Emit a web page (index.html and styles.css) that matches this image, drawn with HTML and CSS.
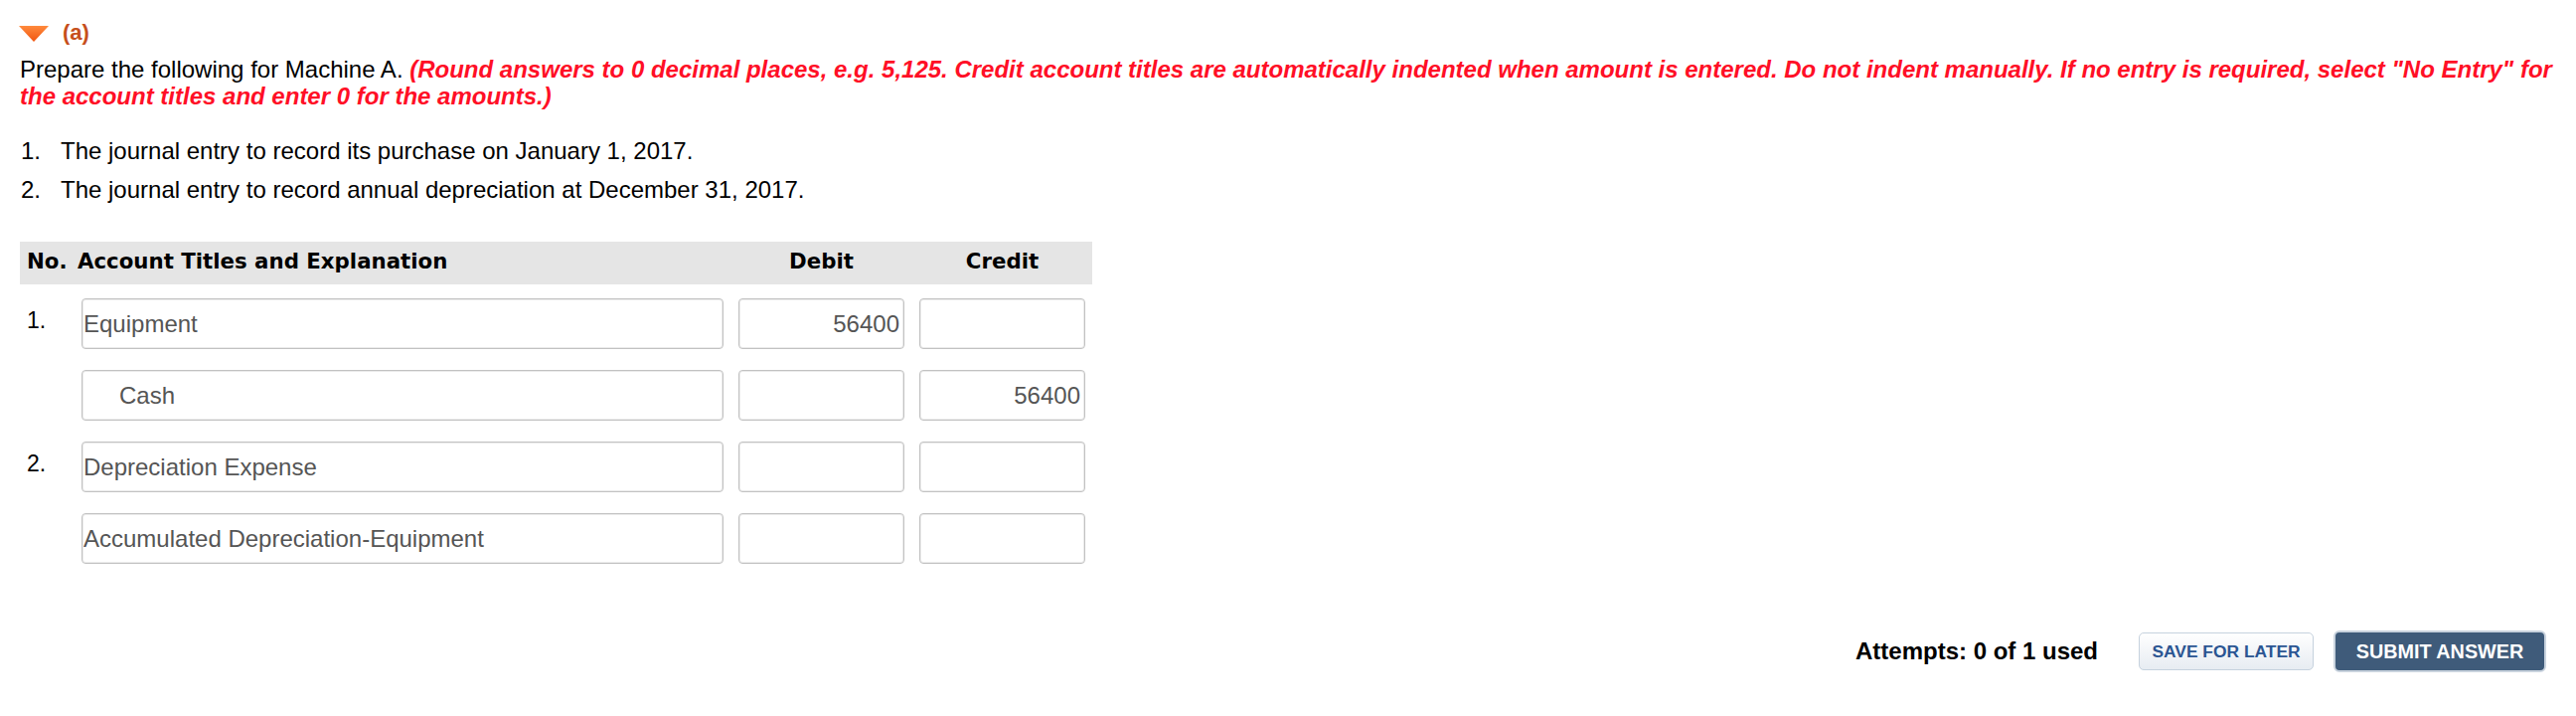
FILE: index.html
```html
<!DOCTYPE html>
<html lang="en">
<head>
<meta charset="utf-8">
<title>Question (a)</title>
<link rel="stylesheet" href="styles.css">
</head>
<body>
<div class="page">
  <div class="part-head">
    <svg class="caret" width="30" height="16" viewBox="0 0 30 16" aria-hidden="true">
      <defs>
        <linearGradient id="cg" x1="0" y1="0" x2="0" y2="1">
          <stop offset="0" stop-color="#ff8a3c"/>
          <stop offset="1" stop-color="#f05510"/>
        </linearGradient>
      </defs>
      <polygon points="0,0 30,0 15,16" fill="url(#cg)"/>
    </svg>
    <span class="part-label">(a)</span>
  </div>

  <p class="instructions">Prepare the following for Machine A. <em class="warn">(Round answers to 0 decimal places, e.g. 5,125. Credit account titles are automatically indented when amount is entered. Do not indent manually. If no entry is required, select "No Entry" for the account titles and enter 0 for the amounts.)</em></p>

  <ol class="tasks">
    <li><span class="num">1.</span><span>The journal entry to record its purchase on January 1, 2017.</span></li>
    <li><span class="num">2.</span><span>The journal entry to record annual depreciation at December 31, 2017.</span></li>
  </ol>

  <div class="journal">
    <div class="jhead">
      <div class="h-no">No.</div>
      <div class="h-acct">Account Titles and Explanation</div>
      <div class="h-amt">Debit</div>
      <div class="h-amt">Credit</div>
    </div>

    <div class="jrow">
      <div class="rno">1.</div>
      <input class="fld acct" type="text" value="Equipment">
      <input class="fld amt" type="text" value="56400">
      <input class="fld amt" type="text" value="">
    </div>
    <div class="jrow">
      <div class="rno"></div>
      <input class="fld acct indent" type="text" value="Cash">
      <input class="fld amt" type="text" value="">
      <input class="fld amt" type="text" value="56400">
    </div>
    <div class="jrow">
      <div class="rno">2.</div>
      <input class="fld acct" type="text" value="Depreciation Expense">
      <input class="fld amt" type="text" value="">
      <input class="fld amt" type="text" value="">
    </div>
    <div class="jrow">
      <div class="rno"></div>
      <input class="fld acct" type="text" value="Accumulated Depreciation-Equipment">
      <input class="fld amt" type="text" value="">
      <input class="fld amt" type="text" value="">
    </div>
  </div>

  <div class="actions">
    <span class="attempts">Attempts: 0 of 1 used</span>
    <button class="btn btn-save" type="button">SAVE FOR LATER</button>
    <button class="btn btn-submit" type="button">SUBMIT ANSWER</button>
  </div>
</div>
</body>
</html>
```

FILE: styles.css
```css
html, body {
  margin: 0;
  padding: 0;
  background: #ffffff;
}

body {
  font-family: "Liberation Sans", Arial, Helvetica, sans-serif;
  color: #000000;
}

.page {
  padding: 18px 4px 0 20px;
}

.part-head {
  display: flex;
  align-items: center;
  height: 30px;
}

.caret {
  display: block;
  margin-left: -1px;
  margin-top: 2px;
}

.part-label {
  margin-left: 14px;
  font-size: 22px;
  font-weight: bold;
  line-height: 30px;
  color: #c64f1c;
}

.instructions {
  margin: 8px 0 0 0;
  font-size: 24px;
  line-height: 27px;
}

.warn {
  font-weight: bold;
  font-style: italic;
  color: #ff0f26;
}

.tasks {
  list-style: none;
  margin: 23px 0 0 0;
  padding: 0;
  font-size: 24px;
  line-height: 38.5px;
}

.tasks li {
  display: flex;
}

.tasks .num {
  width: 40px;
  padding-left: 1px;
  flex: none;
}

.journal {
  margin-top: 33px;
  width: 1079px;
}

.jhead,
.jrow {
  display: grid;
  grid-template-columns: 47px 646px 167px 167px;
  column-gap: 15px;
}

.jhead {
  background: #e5e5e5;
  height: 43px;
  box-sizing: border-box;
  padding-bottom: 3px;
  font-family: "DejaVu Sans", Verdana, sans-serif;
  font-weight: bold;
  font-size: 21.3px;
  line-height: 40px;
}

.h-no {
  padding-left: 7px;
  white-space: nowrap;
}

.h-acct {
  margin-left: -4px;
}

.h-amt {
  text-align: center;
}

.jrow {
  margin-top: 14px;
}

.jrow + .jrow {
  margin-top: 21px;
}

.rno {
  padding: 9px 0 0 7px;
  font-size: 23px;
  line-height: 27px;
}

.fld {
  box-sizing: border-box;
  height: 51px;
  width: 100%;
  margin: 0;
  border: 1px solid #c2c2c2;
  border-radius: 4px;
  box-shadow: inset 0 0 0 1px #ebebeb;
  background: #ffffff;
  font-family: "Liberation Sans", Arial, Helvetica, sans-serif;
  font-size: 24px;
  color: #555555;
  padding: 0 4px 0 1px;
  outline: none;
}

.fld.amt {
  text-align: right;
}

.fld.indent {
  padding-left: 37px;
}

.actions {
  display: flex;
  justify-content: flex-end;
  align-items: center;
  margin-top: 67px;
  margin-right: 26px;
  height: 42px;
}

.attempts {
  font-size: 24px;
  font-weight: bold;
  margin-right: 41px;
}

.btn {
  font-family: "Liberation Sans", Arial, Helvetica, sans-serif;
  font-weight: bold;
  cursor: pointer;
  box-sizing: border-box;
  padding: 0;
  white-space: nowrap;
}

.btn-save {
  width: 176px;
  height: 38px;
  border: 1px solid #c6d2de;
  border-radius: 5px;
  background: linear-gradient(#ffffff, #e7ecf2);
  color: #2b5592;
  font-size: 17.4px;
}

.btn-submit {
  margin-left: 20px;
  width: 214px;
  height: 42px;
  border: 2px solid #c9d3de;
  border-radius: 6px;
  background: #3f5b7a;
  color: #ffffff;
  font-size: 19.8px;
}
```
